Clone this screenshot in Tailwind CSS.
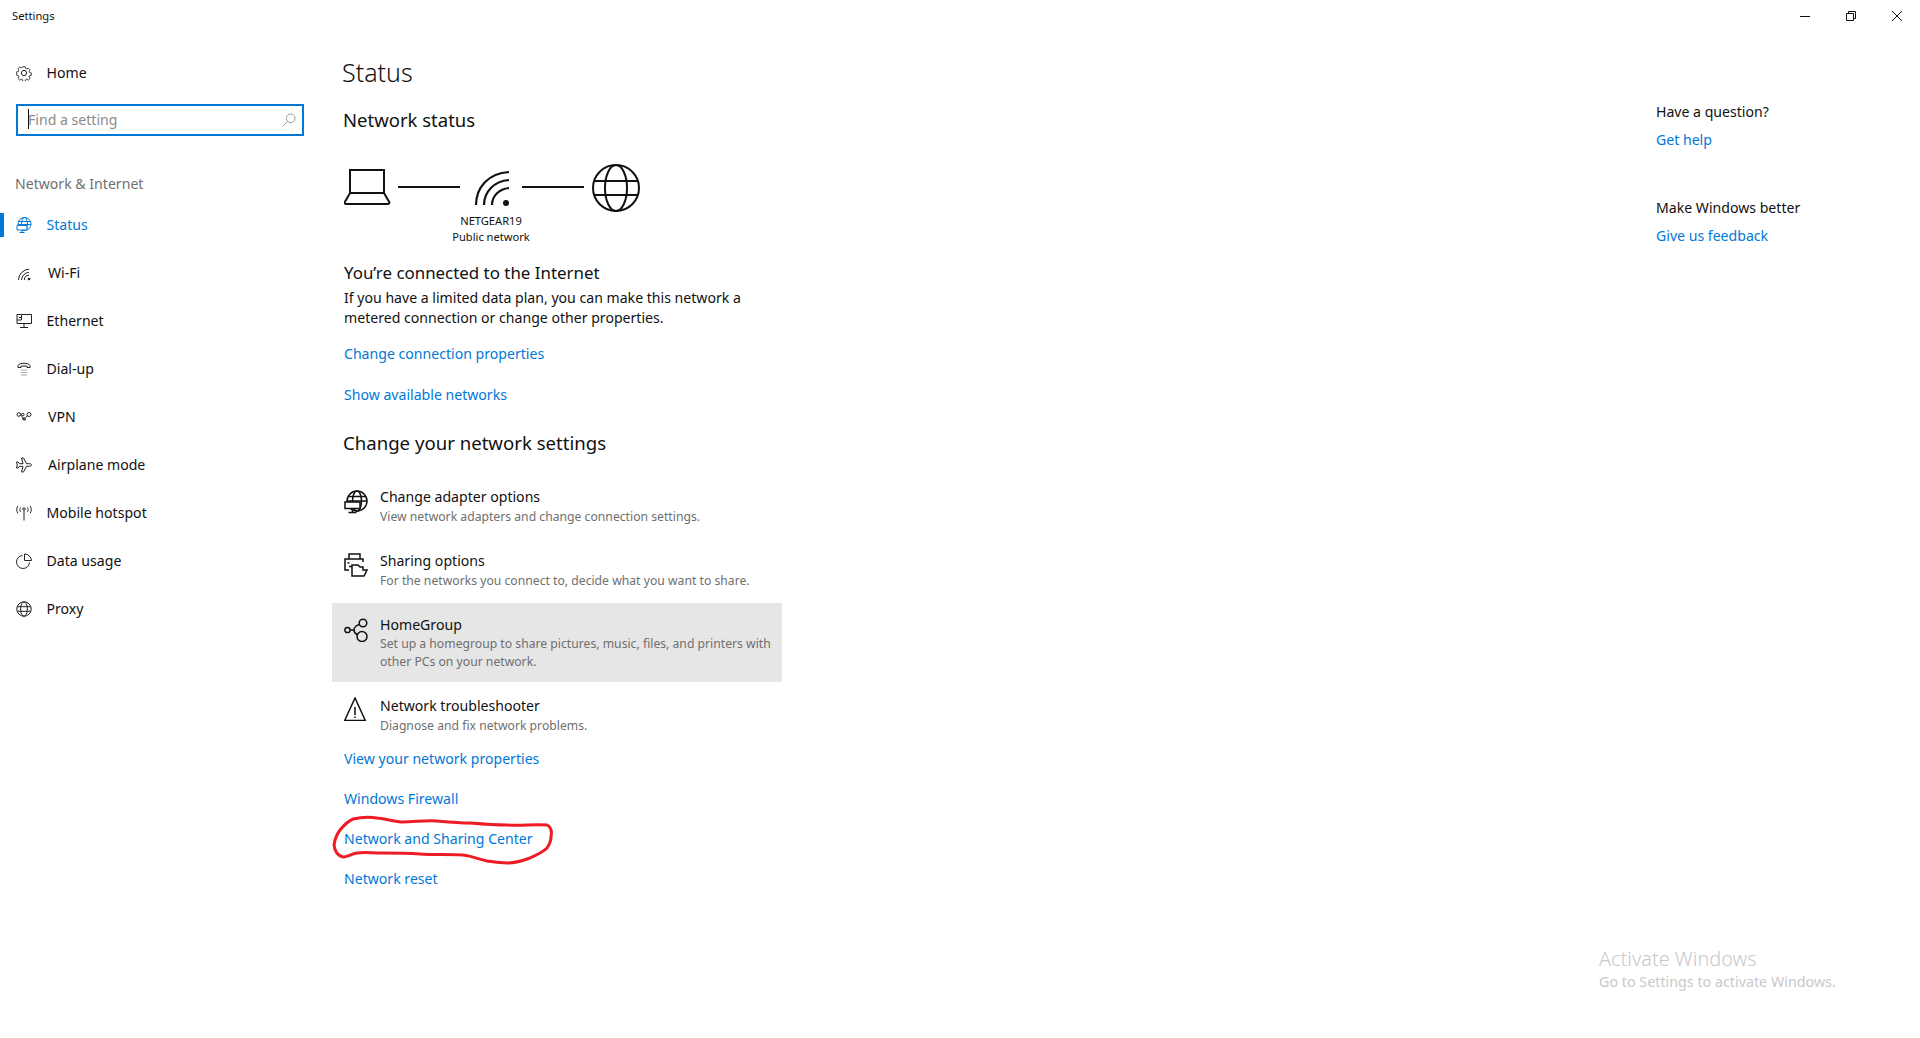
<!DOCTYPE html>
<html lang="en">
<head>
<meta charset="utf-8">
<title>Settings</title>
<script src="https://cdn.jsdelivr.net/npm/@tailwindcss/browser@4"></script>
</head>
<body class="bg-white">
<div class="relative w-[1920px] h-[1038px] overflow-hidden bg-white text-[#111] font-['Noto_Sans','Open_Sans',sans-serif] text-[14.1px]">

  <!-- Title bar -->
  <div class="flex h-8 items-center justify-between">
    <span class="pl-3 text-[11.2px] leading-none">Settings</span>
    <div class="flex items-center gap-[36px] pr-[18px]">
      <svg class="w-[10px] h-[10px]" viewBox="0 0 10 10" fill="none" stroke="#111"><path d="M0 5.500h10"/></svg>
      <svg class="w-[10px] h-[10px]" viewBox="0 0 10 10" fill="none" stroke="#111"><path d="M.5 2.500h7v7h-7zM2.500 2.500v-2h7v7h-2"/></svg>
      <svg class="w-[10px] h-[10px]" viewBox="0 0 10 10" fill="none" stroke="#111"><path d="M0 0l10 10M10 0L0 10"/></svg>
    </div>
  </div>

  <div class="flex">
    <!-- Sidebar -->
    <aside class="w-[332px] shrink-0">
      <div class="flex items-center h-6 mt-[29px] pl-4 gap-[14.5px]">
        <svg class="w-4 h-4" viewBox="0 0 16 16" fill="none" stroke="#222" stroke-width="1"><circle cx="8" cy="8" r="2.600"/><path d="M6.600.6h2.800l.4 2 1.500.7 1.800-1.100 2 2-1.100 1.800.6 1.500 2 .4v2.800l-2 .4-.6 1.500 1.100 1.800-2 2-1.800-1.100-1.500.6-.4 2H6.600l-.4-2-1.500-.6-1.800 1.100-2-2 1.100-1.800-.6-1.500-2-.4V6.600l2-.4.6-1.500L.9 2.900l2-2 1.800 1.100 1.500-.7z" transform="translate(1.200 1.200) scale(.85)"/></svg>
        <span>Home</span>
      </div>
      <div class="relative mt-[19px] ml-4 w-[288px] h-8 border-2 border-[#0078d7] flex items-center justify-between pl-[10px] pr-[6px]">
        <span class="absolute left-[10px] top-[3px] w-px h-[20px] bg-[#111]"></span>
        <span class="text-[#8b8b8b]">Find a setting</span>
        <svg class="w-[14px] h-[14px]" viewBox="0 0 14 14" fill="none" stroke="#999"><circle cx="8.700" cy="5.300" r="4.300"/><path d="M5.600 8.400L.6 13.400"/></svg>
      </div>
      <div class="mt-[37px] pl-[15px] h-[22px] leading-[22px] text-[#6f6f6f]">Network &amp; Internet</div>

      <nav class="mt-[18px]">
        <a class="relative flex items-center h-6 pl-4 gap-[14.5px] text-[#0078d7]">
          <span class="absolute left-0 top-0 w-1 h-6 bg-[#0078d7]"></span>
          <svg class="w-4 h-4" viewBox="0 0 16 16" fill="none" stroke="#0078d7"><circle cx="8.500" cy="7" r="6.500"/><ellipse cx="8.500" cy="7" rx="3" ry="6.500"/><path d="M2.500 4.500h12M2 7.500h13"/><path d="M1 8.500h10v4.500H1zM6 13v2.500M3.500 15.500h5" fill="#fff"/></svg>
          <span>Status</span>
        </a>
        <a class="flex items-center h-6 pl-4 gap-[15px] mt-6">
          <svg class="w-4 h-4" viewBox="0 0 16 16" fill="none" stroke="#222"><path d="M2.500 15A11 11 0 0 1 13 4.200M5.500 15A8 8 0 0 1 13 7.300M8.300 15A5 5 0 0 1 13 10.200"/><circle cx="13" cy="14" r="1.300" fill="#222" stroke="none"/></svg>
          <span class="pl-px">Wi-Fi</span>
        </a>
        <a class="flex items-center h-6 pl-4 gap-[14.5px] mt-6">
          <svg class="w-4 h-4" viewBox="0 0 16 16" fill="none" stroke="#222"><path d="M5.500 1.500h10v9H1V7M8 10.500v3.500M4 14.500h8"/><path d="M1 1.500h4.500v5.500H1zM3 4.500h2.500"/></svg>
          <span>Ethernet</span>
        </a>
        <a class="flex items-center h-6 pl-4 gap-[14.5px] mt-6">
          <svg class="w-4 h-4" viewBox="0 0 16 16" fill="none" stroke="#222"><path d="M2 6.500V4.500C3 1.500 13 1.500 14 4.500v2h-3V5H5v1.500z"/><path d="M5.500 9h1M7.500 9h1M9.500 9h1M5.500 11.500h1M7.500 11.500h1M9.500 11.500h1M5.500 14h1M7.500 14h1M9.500 14h1" stroke-width=".8"/></svg>
          <span>Dial-up</span>
        </a>
        <a class="flex items-center h-6 pl-4 gap-[15px] mt-6">
          <svg class="w-4 h-4" viewBox="0 0 16 16" fill="none" stroke="#222"><circle cx="2.800" cy="5.500" r="1.800"/><circle cx="6.800" cy="5.500" r="1.300"/><circle cx="13" cy="5.500" r="2"/><path d="M4.500 6.500c1 0 2 1.500 3 3.500.6 1.200 1.500 1.500 1.900.8.500-1-1-2.200-1.900-2-.9.2-1.200 1.400-.5 2 1 .5 2.800-2.500 4.300-4"/></svg>
          <span class="pl-px">VPN</span>
        </a>
        <a class="flex items-center h-6 pl-4 gap-[15px] mt-6">
          <svg class="w-4 h-4" viewBox="0 0 16 16" fill="none" stroke="#222"><path d="M15.500 8c0 .8-1 1.300-2 1.300h-3L7.500 15H5.500L7 9.300H3.500L2 11H.5l.8-3-.8-3H2l1.500 1.700H7L5.500 1h2l3 5.700h3c1 0 2 .5 2 1.300z"/></svg>
          <span class="pl-px">Airplane mode</span>
        </a>
        <a class="flex items-center h-6 pl-4 gap-[14.5px] mt-6">
          <svg class="w-4 h-4" viewBox="0 0 16 16" fill="none" stroke="#222"><path d="M8 5.500V15.500M1.800 1c-1.400 2.200-1.400 5 0 7.200M4.500 2.500c-.8 1.300-.8 3 0 4.300M14.200 1c1.400 2.200 1.400 5 0 7.200M11.500 2.500c.8 1.300.8 3 0 4.300"/><circle cx="8" cy="4" r="1.200"/></svg>
          <span>Mobile hotspot</span>
        </a>
        <a class="flex items-center h-6 pl-4 gap-[14.5px] mt-6">
          <svg class="w-4 h-4" viewBox="0 0 16 16" fill="none" stroke="#222"><path d="M6.500 2.500a6.500 6.500 0 1 0 7 7"/><path d="M8.500 1v6.500H15.500A7 7 0 0 0 8.500 1z"/></svg>
          <span>Data usage</span>
        </a>
        <a class="flex items-center h-6 pl-4 gap-[14.5px] mt-6">
          <svg class="w-4 h-4" viewBox="0 0 16 16" fill="none" stroke="#222"><circle cx="8" cy="8" r="7.200"/><ellipse cx="8" cy="8" rx="3.400" ry="7.200"/><path d="M1.200 5.700h13.600M1.200 10.300h13.600"/></svg>
          <span>Proxy</span>
        </a>
      </nav>
    </aside>

    <!-- Main -->
    <main class="flex-1 min-w-0">
      <h1 class="ml-[10px] mt-[20px] h-10 leading-10 text-[25px] font-light">Status</h1>
      <h2 class="ml-[11px] mt-[12px] h-8 leading-8 text-[18.5px]">Network status</h2>

      <!-- Diagram -->
      <div class="relative ml-[12px] mt-[28px] h-[94px] w-[300px]">
        <div class="flex items-start">
          <svg class="w-[48px] h-[48px]" viewBox="0 0 48 48" fill="none" stroke="#111" stroke-width="2"><path d="M6 6h34v23H6zM6 29L.8 38c-.5 1 0 2 1.200 2h42c1.200 0 1.700-1 1.200-2L40 29"/></svg>
          <div class="w-[62px] h-0.5 bg-[#111] ml-[6px] mt-[22px]"></div>
          <svg class="w-[48px] h-[48px] ml-[10px]" viewBox="0 0 48 48" fill="none" stroke="#111" stroke-width="2.200"><path d="M6 41C6 24 18 9 39 8M14 41C14 28 24 17 39 16M22 41c0-9 7-16 17-17"/><circle cx="36" cy="39" r="3" fill="#111" stroke="none"/></svg>
          <div class="w-[62px] h-0.5 bg-[#111] ml-[4px] mt-[22px]"></div>
          <svg class="w-[48px] h-[48px] ml-[8px]" viewBox="0 0 48 48" fill="none" stroke="#111" stroke-width="2"><circle cx="24" cy="24" r="23"/><ellipse cx="24" cy="24" rx="11" ry="23"/><path d="M3 17h42M3 31h42"/></svg>
        </div>
        <div class="absolute left-[82px] top-[49px] w-[130px] text-center text-[11.1px] leading-[16px]">
          <div>NETGEAR19</div><div>Public network</div>
        </div>
      </div>

      <div class="ml-[12px] mt-[2px] h-[26px] leading-[26px] text-[16.9px]">You’re connected to the Internet</div>
      <p class="ml-[12px] mt-[2px] w-[404px] leading-[20px]">If you have a limited data plan, you can make this network a metered connection or change other properties.</p>
      <a class="block ml-[12px] mt-[16px] h-5 leading-5 text-[#0078d7]">Change connection properties</a>
      <a class="block ml-[12px] mt-[21px] h-5 leading-5 text-[#0078d7]">Show available networks</a>
      <h2 class="ml-[11px] mt-[22px] h-8 leading-8 text-[18.6px]">Change your network settings</h2>

      <!-- Option rows -->
      <div class="mt-[26px] w-[450px] h-[64px] flex pl-[12px] pt-[2px]">
        <svg class="w-6 h-6 mt-[3px] shrink-0" viewBox="0 0 24 24" fill="none" stroke="#111" stroke-width="1.500"><circle cx="13" cy="11" r="10"/><ellipse cx="13" cy="11" rx="4.500" ry="10"/><path d="M4.500 6.500h17M3 11h20"/><path d="M1 12h15v6.500H1zM8.500 18.500v3.500M4.500 22.500h8" fill="#fff"/></svg>
        <div class="ml-3"><div class="h-5 leading-5">Change adapter options</div><div class="mt-px text-[12.2px] leading-[18px] text-[#6f6f6f]">View network adapters and change connection settings.</div></div>
      </div>
      <div class="w-[450px] h-[54px] flex pl-[12px] pt-[2px]">
        <svg class="w-6 h-6 mt-[2px] shrink-0" viewBox="0 0 24 24" fill="none" stroke="#111" stroke-width="1.500"><path d="M5 6V1h11v5M5 17H1V6h18v3"/><path d="M3.500 10h2M5 13.500h4"/><path d="M8 23V12h6l2 2h3v3h4l-3 6z" fill="#fff"/></svg>
        <div class="ml-3"><div class="h-5 leading-5">Sharing options</div><div class="mt-px text-[12.2px] leading-[18px] text-[#6f6f6f]">For the networks you connect to, decide what you want to share.</div></div>
      </div>
      <div class="w-[450px] h-[79px] flex pl-[12px] pt-[12px] bg-[#e6e6e6]">
        <svg class="w-6 h-6 mt-[3px] shrink-0" viewBox="0 0 24 24" fill="none" stroke="#111" stroke-width="1.500"><circle cx="3.500" cy="12" r="2.600"/><circle cx="19" cy="5" r="3.800"/><circle cx="18" cy="18.500" r="5"/><path d="M6.500 12H10C10 9 13 7 15.500 6.500M10 12c0 2 1.500 4 3.500 5"/></svg>
        <div class="ml-3 w-[404px]"><div class="h-5 leading-5">HomeGroup</div><div class="text-[12.2px] leading-[18px] text-[#6f6f6f]">Set up a homegroup to share pictures, music, files, and printers with other PCs on your network.</div></div>
      </div>
      <div class="w-[450px] h-[64px] flex pl-[12px] pt-[14px]">
        <svg class="w-6 h-6 mt-[1px] shrink-0" viewBox="0 0 24 24" fill="none" stroke="#111" stroke-width="1.500"><path d="M11 1L.7 23.500H21.300z"/><path d="M11 10v8M11 19.500v1.500"/></svg>
        <div class="ml-3"><div class="h-5 leading-5">Network troubleshooter</div><div class="mt-px text-[12.2px] leading-[18px] text-[#6f6f6f]">Diagnose and fix network problems.</div></div>
      </div>
      <a class="block ml-[12px] mt-[3px] h-5 leading-5 text-[#0078d7]">View your network properties</a>
      <a class="block ml-[12px] mt-5 h-5 leading-5 text-[#0078d7]">Windows Firewall</a>
      <a class="block ml-[12px] mt-5 h-5 leading-5 text-[#0078d7]">Network and Sharing Center</a>
      <a class="block ml-[12px] mt-5 h-5 leading-5 text-[#0078d7]">Network reset</a>
    </main>

    <!-- Right column -->
    <aside class="w-[264px] shrink-0">
      <div class="mt-[70px] h-5 leading-5">Have a question?</div>
      <a class="block mt-2 h-5 leading-5 text-[#0078d7]">Get help</a>
      <div class="mt-[48px] h-5 leading-5">Make Windows better</div>
      <a class="block mt-2 h-5 leading-5 text-[#0078d7]">Give us feedback</a>
    </aside>
  </div>

  <!-- Hand-drawn annotation -->
  <svg class="absolute left-0 top-0 pointer-events-none" width="1920" height="1038" viewBox="0 0 1920 1038" fill="none" stroke="#ed1c24" stroke-width="3" stroke-linejoin="round" stroke-linecap="round">
    <path d="M334 845C335 838 337 834 340 830C345 824 348 821 353 819C362 817 370 817 377 818C388 819 395 822 403 822C415 822 425 820 437 821C448 822 458 823 470 823C482 824 495 825 507 825C520 826 535 824 547 825C551 827 552 832 551 837C551 842 549 845 547 848C542 853 536 855 530 858C522 861 515 863 507 863C500 863 494 862 487 861C478 859 472 856 463 855C449 854 434 855 420 854C407 853 393 853 380 853C372 853 364 852 357 853C351 854 347 857 343 857C339 856 335 853 334 845Z"/>
  </svg>

  <!-- Watermark -->
  <div class="absolute left-[1599px] top-[947px] text-[#c9c9c9]">
    <div class="h-6 leading-6 text-[19.9px] font-light">Activate Windows</div>
    <div class="h-[22px] leading-[22px] text-[14.3px]">Go to Settings to activate Windows.</div>
  </div>
</div>
</body>
</html>
